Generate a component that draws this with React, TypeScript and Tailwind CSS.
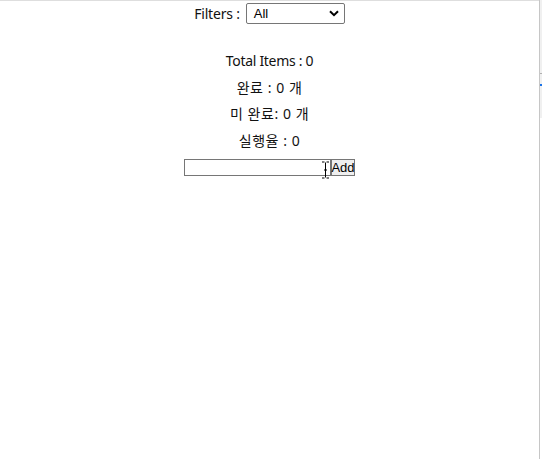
import React from "react";

export default function App() {
  return (
    <div className="relative w-[542px] h-[459px] bg-white overflow-hidden" style={{ fontFamily: '"Noto Sans", "Noto Sans CJK KR", sans-serif' }}>
      <div className="absolute left-0 top-0 w-[539px] h-px bg-[#dedede]" />
      <div className="absolute left-[539px] top-0 w-px h-full bg-[#c6c6c6]" />
      <div className="absolute left-[540px] top-0 w-[2px] h-[118px] bg-[#f0f0f0]" />
      <div className="absolute left-[540px] top-[73px] w-[2px] h-px bg-[#b0b0b0]" />
      <div className="absolute left-[540px] top-[84px] w-[2px] h-[2px] bg-[#1a73e8]" />
      <div className="w-[539px] flex flex-col items-center text-[14px] text-[#111] leading-none">
        <div className="mt-[3px] flex items-center h-[21px]">
          <span className="mr-[6px] tracking-[-0.2px]">Filters :</span>
          <div className="w-[99px] h-[21px] border border-[#767676] rounded-[2px] flex items-center justify-between pl-[7px] pr-[5px] text-[13px] text-[#000]" style={{ fontFamily: '"Liberation Sans", Arial, sans-serif' }}>
            <span>All</span>
            <svg width="10" height="7" viewBox="0 0 10 7"><path d="M1 1.2 L5 5.2 L9 1.2" stroke="#000" strokeWidth="2" fill="none" /></svg>
          </div>
        </div>
        <div className="mt-[23px] flex flex-col items-center">
          <div className="h-[27px] flex items-center tracking-[-0.3px]">Total Items : 0</div>
          <div className="h-[27px] flex items-center tracking-[0.55px]">완료 : 0 개</div>
          <div className="h-[26px] flex items-center tracking-[0.55px]">미 완료: 0 개</div>
          <div className="h-[27px] flex items-center tracking-[0.55px]">실행율 : 0</div>
        </div>
        <div className="mt-[5px] flex items-start relative">
          <div className="w-[147px] h-[17px] border border-[#767676] bg-white" />
          <div className="w-[24px] h-[17px] border border-[#767676] bg-[#efefef] flex items-center justify-center text-[13px] text-[#000]" style={{ fontFamily: '"Liberation Sans", Arial, sans-serif' }}>Add</div>
          <svg className="absolute left-[137px] top-[2px]" width="9" height="18" viewBox="0 0 9 18">
            <path d="M1 1 H3.5 M5.5 1 H8 M4.5 1.5 V16.5 M1 17 H3.5 M5.5 17 H8 M3 9 H6" stroke="#000" strokeWidth="1" fill="none" />
          </svg>
        </div>
      </div>
    </div>
  );
}
